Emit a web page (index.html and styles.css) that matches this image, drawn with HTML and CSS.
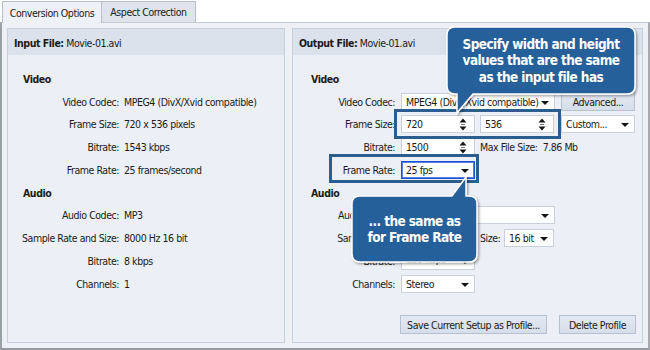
FILE: index.html
```html
<!DOCTYPE html>
<html>
<head>
<meta charset="utf-8">
<link rel="stylesheet" href="styles.css">
</head>
<body>
<div class="window">
  <div class="tabs">
    <div class="tab active">Conversion Options</div>
    <div class="tab">Aspect Correction</div>
  </div>
  <div class="pane">
    <section class="panel input">
      <header class="panel-head"><b>Input File:</b>&nbsp;Movie-01.avi</header>
      <div class="panel-body">
        <div class="group">Video</div>
        <div class="row"><span class="lbl">Video Codec:</span><span class="val">MPEG4 (DivX/Xvid compatible)</span></div>
        <div class="row"><span class="lbl">Frame Size:</span><span class="val">720 x 536 pixels</span></div>
        <div class="row"><span class="lbl">Bitrate:</span><span class="val">1543 kbps</span></div>
        <div class="row"><span class="lbl">Frame Rate:</span><span class="val">25 frames/second</span></div>
        <div class="group">Audio</div>
        <div class="row"><span class="lbl">Audio Codec:</span><span class="val">MP3</span></div>
        <div class="row"><span class="lbl">Sample Rate and Size:</span><span class="val">8000 Hz 16 bit</span></div>
        <div class="row"><span class="lbl">Bitrate:</span><span class="val">8 kbps</span></div>
        <div class="row"><span class="lbl">Channels:</span><span class="val">1</span></div>
      </div>
    </section>
    <section class="panel output">
      <header class="panel-head"><b>Output File:</b>&nbsp;Movie-01.avi</header>
      <div class="panel-body">
        <div class="group">Video</div>
        <div class="row"><span class="lbl">Video Codec:</span><span class="ctl sel w154">MPEG4 (DivX/Xvid compatible)</span><span class="btn w74 gap6">Advanced...</span></div>
        <div class="row"><span class="lbl">Frame Size:</span><span class="ctl spin w74">720<svg class="sp" width="8" height="13" viewBox="0 0 8 13"><path d="M4 0.5L7.5 4.5H0.5Z M4 12.5L7.5 8.5H0.5Z" fill="#151515"/><rect x="2" y="6" width="4" height="1" fill="#777"/></svg></span><span class="ctl spin w74 gap5">536<svg class="sp" width="8" height="13" viewBox="0 0 8 13"><path d="M4 0.5L7.5 4.5H0.5Z M4 12.5L7.5 8.5H0.5Z" fill="#151515"/><rect x="2" y="6" width="4" height="1" fill="#777"/></svg></span><span class="ctl sel w74 gap7">Custom...</span></div>
        <div class="row"><span class="lbl">Bitrate:</span><span class="ctl spin w74">1500<svg class="sp" width="8" height="13" viewBox="0 0 8 13"><path d="M4 0.5L7.5 4.5H0.5Z M4 12.5L7.5 8.5H0.5Z" fill="#151515"/><rect x="2" y="6" width="4" height="1" fill="#777"/></svg></span><span class="note">Max File Size:&nbsp; 7.86 Mb</span></div>
        <div class="row"><span class="lbl">Frame Rate:</span><span class="ctl sel w74 focus">25 fps</span></div>
        <div class="group">Audio</div>
        <div class="row"><span class="lbl">Audio Codec:</span><span class="ctl sel w154">MP3</span></div>
        <div class="row"><span class="lbl">Sample Rate:</span><span class="ctl sel w74">8000 Hz</span><span class="pair"><span>Size:</span><span class="ctl sel w50">16 bit</span></span></div>
        <div class="row"><span class="lbl">Bitrate:</span><span class="ctl sel w74 raised">128 kbps</span></div>
        <div class="row"><span class="lbl">Channels:</span><span class="ctl sel w74">Stereo</span></div>
        <div class="actions">
          <span class="btn save">Save Current Setup as Profile...</span>
          <span class="btn del">Delete Profile</span>
        </div>
      </div>
    </section>
  </div>

  <div class="hl hl-size"></div>
  <div class="hl hl-rate"></div>

  <svg class="callouts" width="650" height="350" viewBox="0 0 650 350">
    <defs>
      <filter id="sh" x="-10%" y="-10%" width="130%" height="140%">
        <feDropShadow dx="1.5" dy="1.5" stdDeviation="1.2" flood-color="#000" flood-opacity="0.35"/>
      </filter>
    </defs>
    <path filter="url(#sh)" d="M455,27 H627 Q635,27 635,35 V86 Q635,94 627,94 H473 L457,113 L457,94 H455 Q447,94 447,86 V35 Q447,27 455,27 Z" fill="#28609a" stroke="#fff" stroke-width="1.5"/>
    <path filter="url(#sh)" d="M360,196 H452 L466,177 V196 H469 Q477,196 477,204 V254 Q477,262 469,262 H360 Q352,262 352,254 V204 Q352,196 360,196 Z" fill="#28609a" stroke="#fff" stroke-width="1.5"/>
  </svg>
  <div class="ctext c1">Specify width and height<br>values that are the same<br>as the input file has</div>
  <div class="ctext c2">... the same as<br>for Frame Rate</div>
</div>
</body>
</html>
```

FILE: styles.css
```css
* { box-sizing: border-box; }

html, body {
  margin: 0;
  padding: 0;
}

body {
  width: 650px;
  height: 350px;
  overflow: hidden;
  background: #ffffff;
  font-family: "DejaVu Sans Condensed", "DejaVu Sans", sans-serif;
  font-stretch: condensed;
  font-size: 10.5px;
  letter-spacing: -0.45px;
  color: #1b1b1b;
}

.window {
  position: relative;
  width: 650px;
  height: 350px;
  display: flex;
  flex-direction: column;
}

/* tabs */
.tabs {
  display: flex;
  align-items: flex-end;
  height: 22px;
  padding-left: 2px;
}

.tab {
  height: 21px;
  width: 95px;
  display: flex;
  align-items: center;
  justify-content: center;
  border: 1px solid #b7bec9;
  border-bottom: none;
  background: #dfe4ec;
  white-space: nowrap;
  margin-left: -1px;
}

.tab.active {
  width: 100px;
  height: 22px;
  margin-left: 0;
  margin-bottom: -1px;
  background: #eef1f7;
  position: relative;
  z-index: 1;
}

/* pane */
.pane {
  flex: 1;
  display: flex;
  gap: 7px;
  padding: 5px 5px 5px 5px;
  background: #eef0f6;
  border-top: 1px solid #c6cbd4;
  border-left: 2px solid #9c9fa5;
  border-right: 2px solid #a6a9af;
  border-bottom: 2px solid #96999f;
}

.panel {
  display: flex;
  flex-direction: column;
  border: 1px solid #c6d0df;
  background: #eceff6;
}

.panel.input { width: 278px; }
.panel.output { width: 351px; }

.panel-head {
  height: 26px;
  flex: none;
  display: flex;
  align-items: center;
  padding-left: 6px;
  padding-top: 1px;
  background: #dce2ec;
  white-space: nowrap;
}

.panel-body {
  flex: 1;
  display: flex;
  flex-direction: column;
  padding: 12.5px 6px 8px 15px;
}

.output .panel-body { padding-left: 18px; }

.group {
  height: 22.75px;
  display: flex;
  align-items: center;
  font-weight: bold;
}

.row {
  height: 22.75px;
  display: flex;
  align-items: center;
  white-space: nowrap;
}

.lbl {
  width: 96px;
  flex: none;
  display: flex;
  justify-content: flex-end;
  margin-right: 5px;
}

.output .lbl {
  width: 84px;
  margin-right: 6px;
}

/* controls */
.ctl {
  position: relative;
  height: 18px;
  flex: none;
  display: flex;
  align-items: center;
  padding-left: 4px;
  background: #ffffff;
  border: 1px solid #c9d0db;
  overflow: hidden;
}

.raised { padding-bottom: 4px; }

.sel::after {
  content: "";
  position: absolute;
  right: 5px;
  top: 7px;
  border-left: 4px solid transparent;
  border-right: 4px solid transparent;
  border-top: 4px solid #151515;
}

.sp {
  position: absolute;
  right: 7px;
  top: 2px;
}

.focus {
  border: 1px solid #1d4fd0;
  box-shadow: inset 0 0 0 1px #5b7fe0;
}

.w154 { width: 154px; }
.w74 { width: 74px; }
.w50 { width: 50px; }
.gap5 { margin-left: 5px; }
.gap6 { margin-left: 6px; }
.gap7 { margin-left: 7px; }

.note { margin-left: 5px; }

.pair {
  width: 74px;
  margin-left: 5px;
  display: flex;
  align-items: center;
  justify-content: space-between;
}

.btn {
  height: 19px;
  flex: none;
  display: flex;
  align-items: center;
  justify-content: center;
  border: 1px solid #b5c1d3;
  background: linear-gradient(#e3e9f2, #d6dee9);
  white-space: nowrap;
}

.actions {
  margin-top: auto;
  display: flex;
  justify-content: flex-end;
  gap: 12px;
}

.btn.save { width: 147px; }
.btn.del { width: 77px; }

/* overlays */
.hl {
  position: absolute;
  border: 3px solid #2b5d8e;
}

.hl-size {
  left: 394px;
  top: 109px;
  width: 167px;
  height: 30px;
}

.hl-rate {
  left: 329px;
  top: 154px;
  width: 150px;
  height: 29px;
}

.callouts {
  position: absolute;
  left: 0;
  top: 0;
  pointer-events: none;
}

.ctext {
  position: absolute;
  display: flex;
  align-items: center;
  justify-content: center;
  text-align: center;
  color: #ffffff;
  font-weight: bold;
  font-size: 13.5px;
  letter-spacing: -0.6px;
  line-height: 16.5px;
  white-space: nowrap;
}

.c1 {
  left: 447px;
  top: 27px;
  width: 188px;
  height: 67px;
}

.c2 {
  left: 352px;
  top: 196px;
  width: 125px;
  height: 66px;
  line-height: 16px;
}
```
